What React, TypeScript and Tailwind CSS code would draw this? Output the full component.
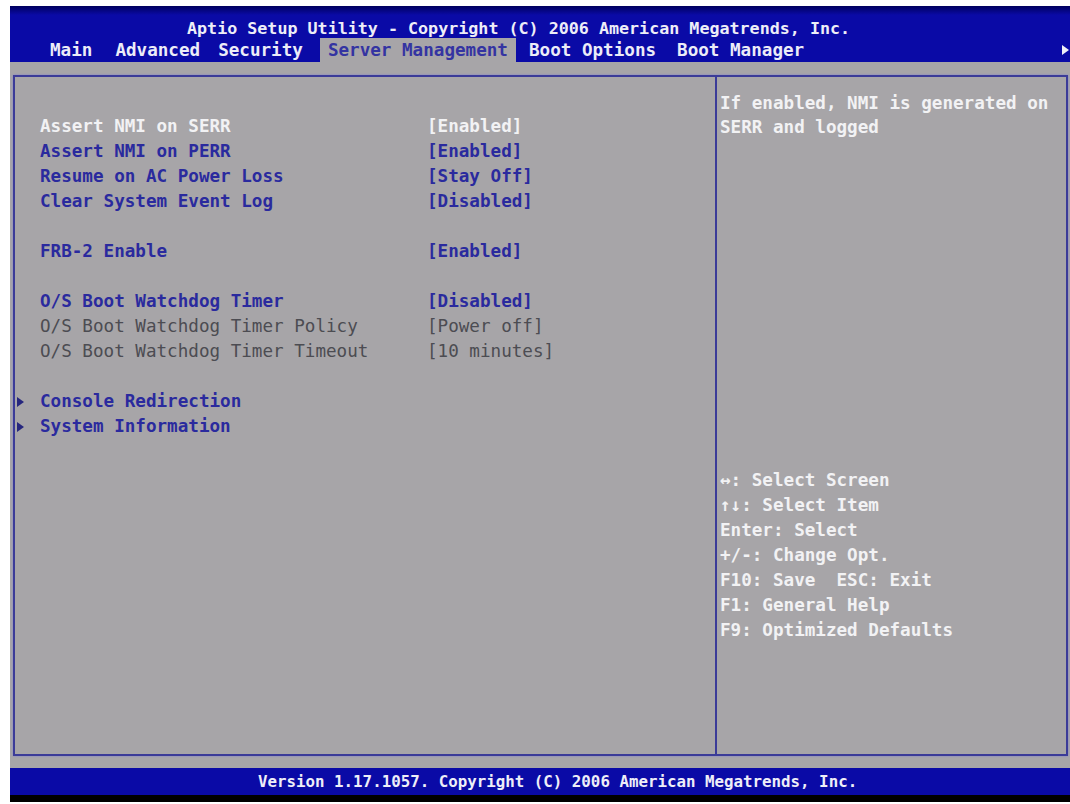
import React from "react";

type Row =
  | { kind: "item"; label: string; value: string; tone: "selected" | "normal" | "disabled" }
  | { kind: "blank" }
  | { kind: "sub"; label: string };

const ROWS: Row[] = [
  { kind: "item", label: "Assert NMI on SERR", value: "[Enabled]", tone: "selected" },
  { kind: "item", label: "Assert NMI on PERR", value: "[Enabled]", tone: "normal" },
  { kind: "item", label: "Resume on AC Power Loss", value: "[Stay Off]", tone: "normal" },
  { kind: "item", label: "Clear System Event Log", value: "[Disabled]", tone: "normal" },
  { kind: "blank" },
  { kind: "item", label: "FRB-2 Enable", value: "[Enabled]", tone: "normal" },
  { kind: "blank" },
  { kind: "item", label: "O/S Boot Watchdog Timer", value: "[Disabled]", tone: "normal" },
  { kind: "item", label: "O/S Boot Watchdog Timer Policy", value: "[Power off]", tone: "disabled" },
  { kind: "item", label: "O/S Boot Watchdog Timer Timeout", value: "[10 minutes]", tone: "disabled" },
  { kind: "blank" },
  { kind: "sub", label: "Console Redirection" },
  { kind: "sub", label: "System Information" },
];

const TABS = [
  { label: "Main", ml: "ml-[40px]" },
  { label: "Advanced", ml: "ml-[23px]" },
  { label: "Security", ml: "ml-[18px]" },
  { label: "Server Management", ml: "ml-[17px]", active: true },
  { label: "Boot Options", ml: "ml-[13px]" },
  { label: "Boot Manager", ml: "ml-[21px]" },
];

const KEYS = [
  "\u2194: Select Screen",
  "\u2191\u2193: Select Item",
  "Enter: Select",
  "+/-: Change Opt.",
  "F10: Save  ESC: Exit",
  "F1: General Help",
  "F9: Optimized Defaults",
];

const toneClass = {
  selected: "text-[#f2f2f4]",
  normal: "text-[#2a2a9e]",
  disabled: "text-[#4c4c52] font-normal",
};

function Tri({ className }: { className: string }) {
  return (
    <svg width="7" height="10" viewBox="0 0 7 10" className={className}>
      <path d="M0 0 L7 5 L0 10 Z" fill="currentColor" />
    </svg>
  );
}

export default function App() {
  return (
    <div className="w-[1070px] h-[804px] bg-white pl-[10px] pt-[6px] font-['DejaVu_Sans_Mono',monospace] font-bold">
      <div className="w-[1060px] h-[796px] flex flex-col bg-black">
        {/* Header */}
        <div className="h-[56px] bg-[linear-gradient(to_bottom,#00005e_0px,#0a0aa6_9px,#0a0aa6_100%)] flex flex-col">
          <div className="h-[32px] pt-[12px] pl-[177px] text-[16.7px] leading-[20px] text-[#eeeef8] whitespace-pre">
            Aptio Setup Utility - Copyright (C) 2006 American Megatrends, Inc.
          </div>
          <div className="flex items-stretch h-[24px] text-[17.6px] leading-[24px] whitespace-pre relative">
            {TABS.map((t) =>
              t.active ? (
                <div key={t.label} className={`${t.ml} bg-[#a7a5a8] text-[#3434a2] px-[8px]`}>
                  {t.label}
                </div>
              ) : (
                <div key={t.label} className={`${t.ml} text-[#ececf8]`}>
                  {t.label}
                </div>
              )
            )}
            <Tri className="absolute right-[1px] top-[7px] text-[#f0f0f8]" />
          </div>
        </div>

        {/* Body */}
        <div className="h-[706px] bg-[#a7a5a8] pl-[3px] pr-[2px] pt-[13px] pb-[12px]">
          <div className="h-full flex border-2 border-[#3b3b98] shadow-[0_0_2px_#8080d0]">
            {/* Left panel */}
            <div className="w-[700px] pt-[37px] text-[17.6px] leading-[25px] whitespace-pre">
              {ROWS.map((r, i) => {
                if (r.kind === "blank") return <div key={i} className="h-[25px]" />;
                if (r.kind === "sub")
                  return (
                    <div key={i} className="flex items-center text-[#2a2a9e]">
                      <div className="w-[25px] pl-[2px] flex items-center">
                        <Tri className="text-[#26267e]" />
                      </div>
                      <div>{r.label}</div>
                    </div>
                  );
                return (
                  <div key={i} className={`flex ${toneClass[r.tone]}`}>
                    <div className="w-[25px]" />
                    <div className="w-[387px]">{r.label}</div>
                    <div>{r.value}</div>
                  </div>
                );
              })}
            </div>
            {/* Right panel */}
            <div className="flex-1 border-l-2 border-[#3b3b98] pl-[3px] pt-[14px] text-[17.6px] text-[#f2f2f4] whitespace-pre">
              <div className="leading-[24px]">
                <div>If enabled, NMI is generated on</div>
                <div>SERR and logged</div>
              </div>
              <div className="mt-[329px] leading-[25px]">
                {KEYS.map((k) => (
                  <div key={k}>{k}</div>
                ))}
              </div>
            </div>
          </div>
        </div>

        {/* Footer */}
        <div className="h-[27px] bg-[#0a0aa6] pl-[248px] text-[15.8px] leading-[27px] text-[#eeeef8] whitespace-pre">
          Version 1.17.1057. Copyright (C) 2006 American Megatrends, Inc.
        </div>
      </div>
    </div>
  );
}
